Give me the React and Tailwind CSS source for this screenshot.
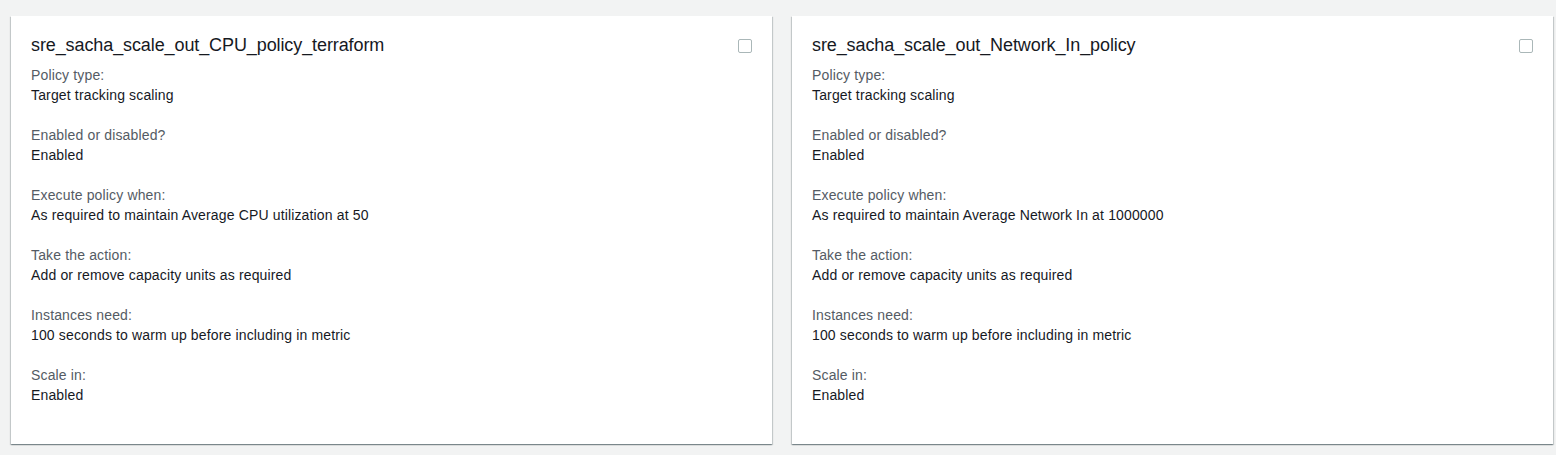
import React from "react";

const cards = [
  {
    title: "sre_sacha_scale_out_CPU_policy_terraform",
    rows: [
      ["Policy type:", "Target tracking scaling"],
      ["Enabled or disabled?", "Enabled"],
      ["Execute policy when:", "As required to maintain Average CPU utilization at 50"],
      ["Take the action:", "Add or remove capacity units as required"],
      ["Instances need:", "100 seconds to warm up before including in metric"],
      ["Scale in:", "Enabled"],
    ],
  },
  {
    title: "sre_sacha_scale_out_Network_In_policy",
    rows: [
      ["Policy type:", "Target tracking scaling"],
      ["Enabled or disabled?", "Enabled"],
      ["Execute policy when:", "As required to maintain Average Network In at 1000000"],
      ["Take the action:", "Add or remove capacity units as required"],
      ["Instances need:", "100 seconds to warm up before including in metric"],
      ["Scale in:", "Enabled"],
    ],
  },
];

function Card({ title, rows }) {
  return (
    <div className="bg-white w-[761px] h-[428px] px-[20px] pt-[17px] shadow-[0_1px_1px_0_rgba(0,28,36,0.3),1px_1px_1px_0_rgba(0,28,36,0.15),-1px_1px_1px_0_rgba(0,28,36,0.15)]">
      <div className="flex items-start justify-between">
        <div className="text-[18px] leading-[24px] tracking-[-0.1px] text-[#16191f]">{title}</div>
        <div className="mt-[6px] w-[14px] h-[14px] rounded-[2px] border border-[#aab7b8] bg-white" />
      </div>
      <div className="mt-[8px] flex flex-col gap-[20px]">
        {rows.map(([label, value]) => (
          <div key={label} className="text-[14px] leading-[20px] tracking-[0.15px]">
            <div className="text-[#545b64]">{label}</div>
            <div className="text-[#16191f]">{value}</div>
          </div>
        ))}
      </div>
    </div>
  );
}

export default function App() {
  return (
    <div
      className="w-[1556px] h-[455px] bg-[#f2f3f3] pl-[11px] pt-[16px] flex gap-[20px]"
      style={{ fontFamily: '"Liberation Sans", Arial, sans-serif' }}
    >
      {cards.map((c) => (
        <Card key={c.title} {...c} />
      ))}
    </div>
  );
}
